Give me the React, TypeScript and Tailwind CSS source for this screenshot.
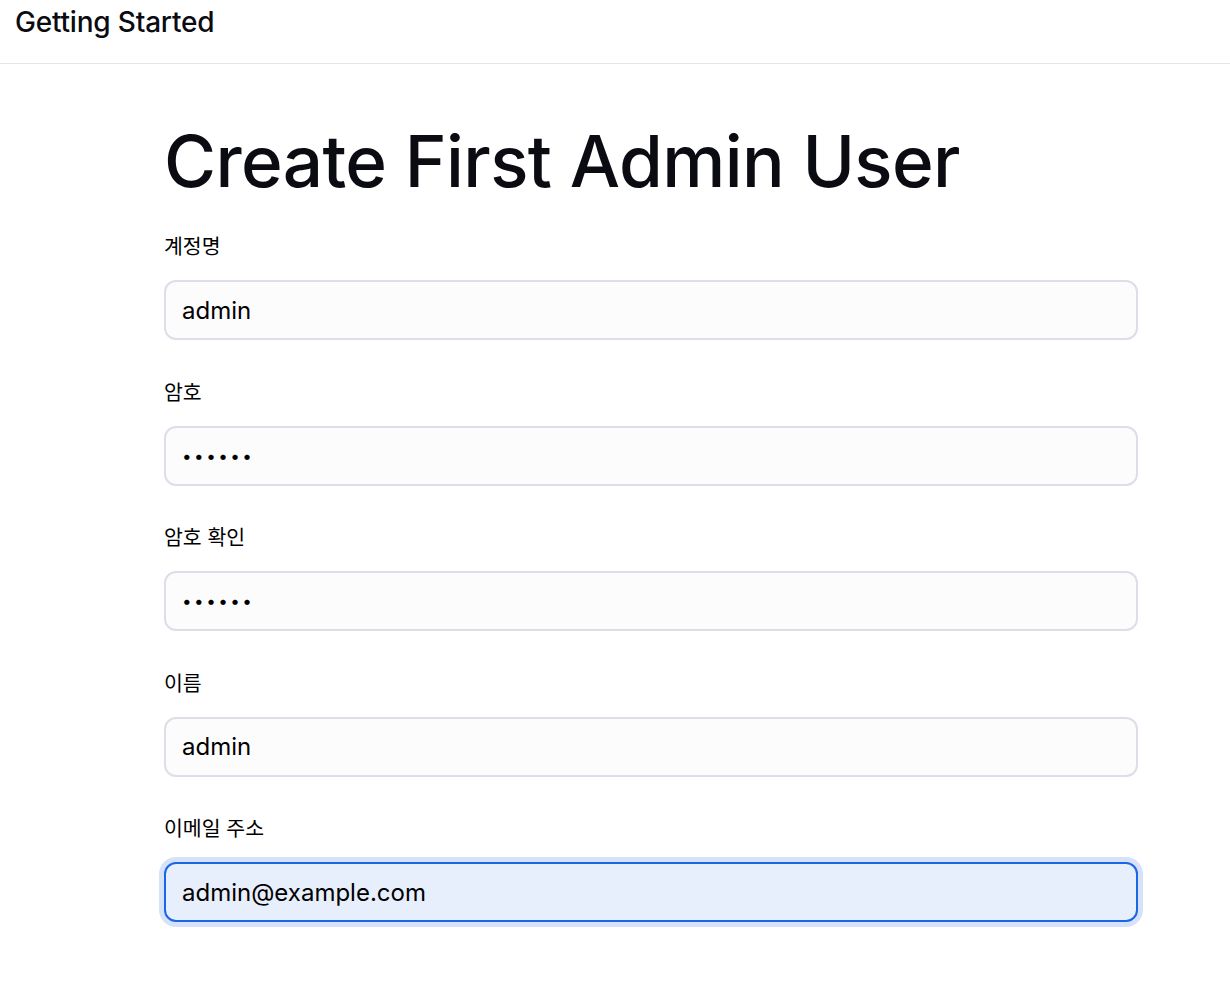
import { useState } from "react";

interface Field {
  label: string;
  type: string;
  value: string;
}

const fields: Field[] = [
  { label: "계정명", type: "text", value: "admin" },
  { label: "암호", type: "password", value: "123456" },
  { label: "암호 확인", type: "password", value: "123456" },
  { label: "이름", type: "text", value: "admin" },
  { label: "이메일 주소", type: "email", value: "admin@example.com" },
];

const font = "font-['Inter','Noto_Sans_CJK_KR',sans-serif]";

const App = () => {
  const [values, setValues] = useState<string[]>(fields.map((f) => f.value));

  return (
    <div className={`min-h-screen bg-white text-[#0b0b12] ${font}`}>
      <header className="h-[64px] border-b border-[#e5e5e5] px-[15px] pt-[4px]">
        <span className="text-[28px] font-medium leading-[36px] tracking-[-0.2px]">Getting Started</span>
      </header>

      <main className="pl-[164px] pr-[92px] pt-[57px]">
        <h1 className="text-[71px] font-medium leading-[80px] tracking-[-0.6px] mb-[33px]">
          Create First Admin User
        </h1>

        <form className="flex flex-col gap-[39.5px]">
          {fields.map((item: Field, index: number) => {
            const last = index === fields.length - 1;
            const password = item.type === "password";
            return (
              <div key={index} className="flex flex-col gap-[20px]">
                <label className="text-[20.5px] leading-[26px] text-black">{item.label}</label>
                <input
                  type={item.type}
                  value={values[index]}
                  onChange={(e) => {
                    const next = [...values];
                    next[index] = e.target.value;
                    setValues(next);
                  }}
                  className={`h-[60px] w-full rounded-[12px] px-[16px] outline-none text-black ${
                    password ? "text-[17px] tracking-[2.5px]" : "text-[24px]"
                  } ${
                    last
                      ? "border-2 border-[#1a66e6] bg-[#e8effc] ring-[5px] ring-[#d5e2f9]"
                      : "border-2 border-[#dcdee8] bg-[#fcfcfc]"
                  }`}
                />
              </div>
            );
          })}
        </form>
      </main>
    </div>
  );
};

export default App;
